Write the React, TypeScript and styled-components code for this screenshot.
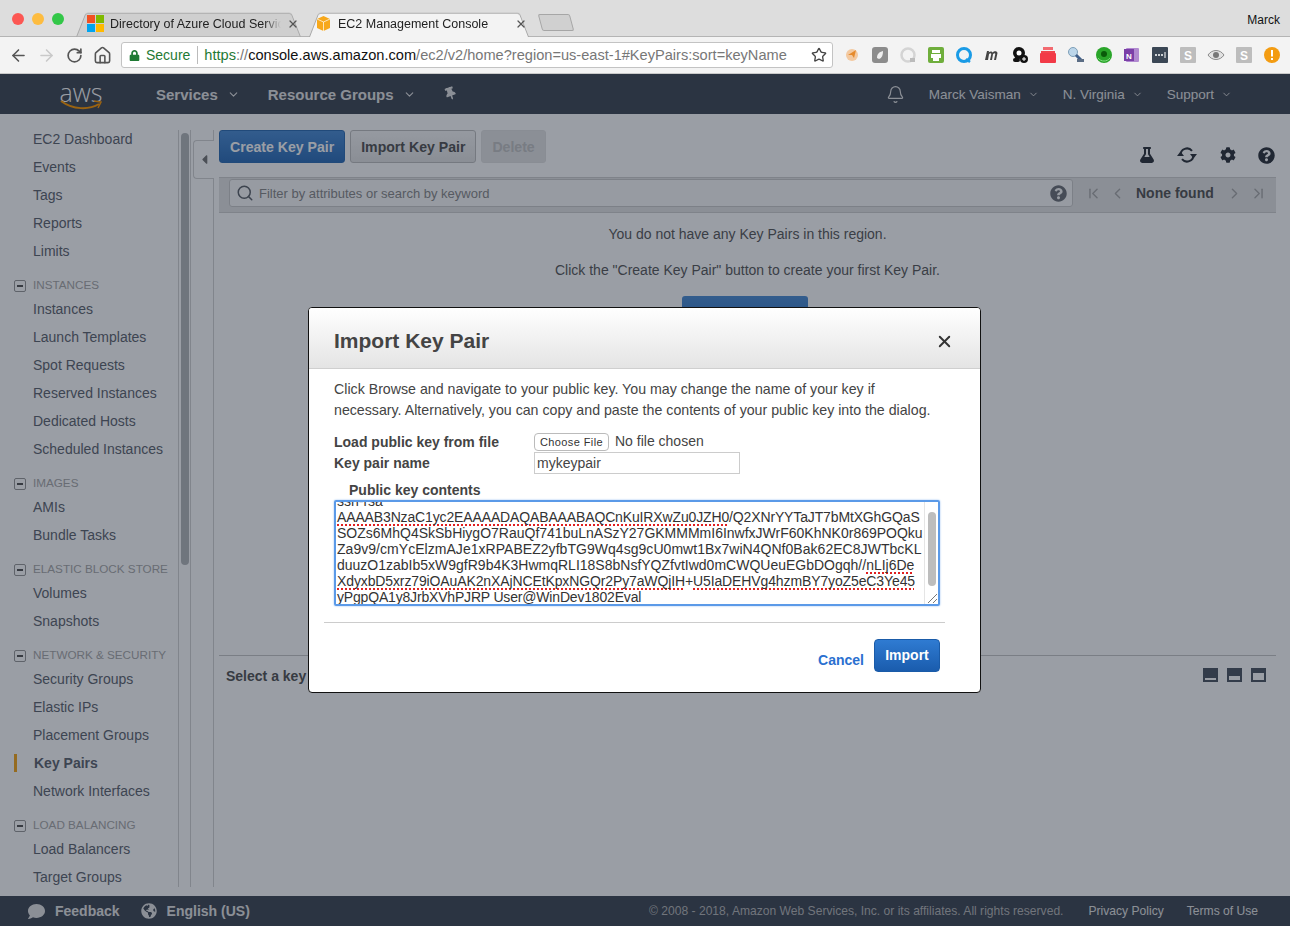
import React from "react";
import styled, { createGlobalStyle } from "styled-components";
import {
  ArrowLeft,
  ArrowRight,
  RotateCw,
  Home,
  Star,
  Bell,
  Search,
  ChevronDown,
  ChevronFirst,
  ChevronLast,
  ChevronLeft,
  ChevronRight,
  X,
} from "lucide-react";
import {
  FaLock,
  FaFlask,
  FaCog,
  FaQuestionCircle,
  FaThumbtack,
  FaComment,
  FaGlobeAmericas,
  FaCaretLeft,
} from "react-icons/fa";

const GlobalStyle = createGlobalStyle`
  html, body {
    margin: 0;
    padding: 0;
    background: #fff;
    font-family: "Liberation Sans", Arial, sans-serif;
  }
`;

const navGroups = [
  { title: "", items: ["EC2 Dashboard", "Events", "Tags", "Reports", "Limits"] },
  {
    title: "INSTANCES",
    items: ["Instances", "Launch Templates", "Spot Requests", "Reserved Instances", "Dedicated Hosts", "Scheduled Instances"],
  },
  { title: "IMAGES", items: ["AMIs", "Bundle Tasks"] },
  { title: "ELASTIC BLOCK STORE", items: ["Volumes", "Snapshots"] },
  {
    title: "NETWORK & SECURITY",
    items: ["Security Groups", "Elastic IPs", "Placement Groups", "Key Pairs", "Network Interfaces"],
  },
  { title: "LOAD BALANCING", items: ["Load Balancers", "Target Groups"] },
];

const extensionIcons = [
  <svg key="a" viewBox="0 0 18 18" width="18" height="18"><circle cx="9" cy="9" r="6" fill="#f3c9a0" /><path d="M5 9l8-5-2 8-2-3z" fill="#e58a2c" /></svg>,
  <svg key="b" viewBox="0 0 18 18" width="18" height="18"><rect x="1" y="1" width="16" height="16" rx="3" fill="#8c8c8c" /><path d="M6 12c0-4 2-6 6-7 0 4-1 7-4 8z" fill="#eee" /></svg>,
  <svg key="c" viewBox="0 0 18 18" width="18" height="18"><circle cx="9" cy="9" r="6.500" fill="none" stroke="#d4d4d4" strokeWidth="2.500" /><rect x="11" y="12" width="5" height="4" fill="#bbb" /></svg>,
  <svg key="d" viewBox="0 0 18 18" width="18" height="18"><rect x="1" y="1" width="16" height="16" rx="2" fill="#6fae3c" /><path d="M5 4h8v3H5zM4 8h10v4h-2v3H6v-3H4z" fill="#fff" /></svg>,
  <svg key="e" viewBox="0 0 18 18" width="18" height="18"><circle cx="9" cy="9" r="6.500" fill="none" stroke="#1a9be6" strokeWidth="3" /><path d="M11 13l4 3" stroke="#1a9be6" strokeWidth="2.500" /></svg>,
  <svg key="f" viewBox="0 0 18 18" width="18" height="18"><path d="M2 14l2-9h2l-.3 1.500C7 5 9 5 9.600 6.600 11 5 14 4.800 14.500 7l-1.500 7h-2l1.300-6c0-1-1.500-1-2.300.3L9 14H7l1.300-6c0-1-1.600-1-2.300.3L5 14z" fill="#444" /></svg>,
  <svg key="g" viewBox="0 0 18 18" width="18" height="18"><circle cx="8" cy="7" r="6" fill="#111" /><circle cx="8" cy="7" r="2.500" fill="#fff" /><circle cx="13" cy="13" r="4" fill="#111" /><path d="M11 13h4M13 11v4" stroke="#fff" /><rect x="2" y="12" width="7" height="4" rx="2" fill="#111" /></svg>,
  <svg key="h" viewBox="0 0 18 18" width="18" height="18"><rect x="4" y="1" width="10" height="3" fill="#f26a70" /><rect x="2" y="5" width="14" height="2" fill="#f0444d" /><rect x="1" y="7" width="16" height="10" rx="1" fill="#f23a47" /></svg>,
  <svg key="i" viewBox="0 0 18 18" width="18" height="18"><circle cx="6" cy="6" r="4.500" fill="#bcd6ea" stroke="#7d9fb8" /><path d="M9 9l5 5" stroke="#3f5f8a" strokeWidth="3" /><rect x="10" y="13" width="7" height="3" fill="#5b6d85" /></svg>,
  <svg key="j" viewBox="0 0 18 18" width="18" height="18"><circle cx="9" cy="9" r="8" fill="#2aa52a" /><circle cx="9" cy="8" r="3" fill="#0a5a0a" /><path d="M3 12c3 4 9 4 12 0" stroke="#7fdc7f" fill="none" /></svg>,
  <svg key="k" viewBox="0 0 18 18" width="18" height="18"><rect x="3" y="2" width="13" height="14" rx="1" fill="#b18ad0" /><rect x="1" y="3" width="10" height="12" fill="#7b3fa8" /><text x="3" y="12.500" fontSize="8" fontWeight="700" fill="#fff">N</text></svg>,
  <svg key="l" viewBox="0 0 18 18" width="18" height="18"><rect x="1" y="1" width="16" height="16" rx="1" fill="#3b4755" /><circle cx="5" cy="9" r="1" fill="#fff" /><circle cx="8" cy="9" r="1" fill="#fff" /><circle cx="11" cy="9" r="1" fill="#fff" /><rect x="13.500" y="6" width="1" height="6" fill="#fff" /></svg>,
  <svg key="m" viewBox="0 0 18 18" width="18" height="18"><rect x="1" y="1" width="16" height="16" rx="1" fill="#bdbdbd" /><text x="5" y="14" fontSize="12" fontWeight="700" fill="#fff">S</text></svg>,
  <svg key="n" viewBox="0 0 18 18" width="18" height="18"><path d="M1 9c4-6 12-6 16 0-4 6-12 6-16 0z" fill="#e2e2e2" stroke="#8a8a8a" /><circle cx="9" cy="9" r="3" fill="#777" /></svg>,
  <svg key="o" viewBox="0 0 18 18" width="18" height="18"><rect x="1" y="1" width="16" height="16" rx="1" fill="#bdbdbd" /><text x="5" y="14" fontSize="12" fontWeight="700" fill="#fff">S</text></svg>,
  <svg key="p" viewBox="0 0 18 18" width="18" height="18"><circle cx="9" cy="9" r="8" fill="#f39c12" /><rect x="8" y="4" width="2" height="6.500" fill="#fff" /><rect x="8" y="12" width="2" height="2" fill="#fff" /></svg>,
];

const App: React.FC = () => {
  return (
    <Root>
      <GlobalStyle />
      <TabStrip>
        <TrafficLights>
          <Light $color="#fc5753" />
          <Light $color="#fdbc40" />
          <Light $color="#33c748" />
        </TrafficLights>
        <BrowserTab $width={233} $inset={15}>
          <svg viewBox="0 0 17 17" width="17" height="17">
            <rect x="0" y="0" width="8" height="8" fill="#f25022" />
            <rect x="9" y="0" width="8" height="8" fill="#7fba00" />
            <rect x="0" y="9" width="8" height="8" fill="#00a4ef" />
            <rect x="9" y="9" width="8" height="8" fill="#ffb900" />
          </svg>
          <TabTitle>Directory of Azure Cloud Services</TabTitle>
          <X size={12} strokeWidth={2.500} color="#555" />
        </BrowserTab>
        <BrowserTab $active $width={228} $inset={10}>
          <svg viewBox="0 0 17 17" width="17" height="17">
            <path d="M8.500 1L15 4v9l-6.500 3L2 13V4z" fill="#f7a81b" />
            <path d="M2 4l6.500 3L15 4M8.500 7v9" stroke="#fff" fill="none" strokeWidth="0.700" />
          </svg>
          <TabTitle>EC2 Management Console</TabTitle>
          <X size={12} strokeWidth={2.500} color="#555" />
        </BrowserTab>
        <NewTab />
        <ProfileName>Marck</ProfileName>
      </TabStrip>

      <BrowserBar>
        <BarIcon><ArrowLeft size={19} color="#555" /></BarIcon>
        <BarIcon><ArrowRight size={19} color="#c9c9c9" /></BarIcon>
        <BarIcon><RotateCw size={17} color="#555" strokeWidth={2.400} /></BarIcon>
        <BarIcon><Home size={19} color="#555" /></BarIcon>
        <AddressBar>
          <FaLock size={11} color="#1f7a34" />
          <SecureLabel>Secure</SecureLabel>
          <AddressDivider />
          <Url>
            <UrlScheme>https</UrlScheme>
            <UrlMuted>://</UrlMuted>
            <UrlHost>console.aws.amazon.com</UrlHost>
            <UrlMuted>/ec2/v2/home?region=us-east-1#KeyPairs:sort=keyName</UrlMuted>
          </Url>
          <Star size={16} color="#444" />
        </AddressBar>
        <Extensions>
          {extensionIcons.map((icon) => (
            <ExtensionSlot key={icon.key}>{icon}</ExtensionSlot>
          ))}
        </Extensions>
      </BrowserBar>

      <Page>
        <Header>
          <Logo>
            <LogoText>aws</LogoText>
            <svg viewBox="0 0 42 10" width="42" height="10">
              <path d="M1 1c12 9 28 9 38 3" fill="none" stroke="#f90" strokeWidth="2" />
              <path d="M34 1l7 1-3 6" fill="none" stroke="#f90" strokeWidth="1.500" />
            </svg>
          </Logo>
          <HeaderMenu $bold>Services<ChevronDown size={13} /></HeaderMenu>
          <HeaderMenu $bold>Resource Groups<ChevronDown size={13} /></HeaderMenu>
          <PinIcon><FaThumbtack size={13} /></PinIcon>
          <HeaderRight>
            <BellIcon><Bell size={19} strokeWidth={1.500} /></BellIcon>
            <HeaderMenu>Marck Vaisman<ChevronDown size={11} /></HeaderMenu>
            <HeaderMenu>N. Virginia<ChevronDown size={11} /></HeaderMenu>
            <HeaderMenu>Support<ChevronDown size={11} /></HeaderMenu>
          </HeaderRight>
        </Header>

        <Content>
          <Sidebar>
            {navGroups.map((group) => (
              <div key={group.title || "top"}>
                {group.title && (
                  <GroupTitle>
                    <GroupToggle />
                    {group.title}
                  </GroupTitle>
                )}
                {group.items.map((item) => (
                  <NavItem key={item} $active={item === "Key Pairs"}>{item}</NavItem>
                ))}
              </div>
            ))}
          </Sidebar>
          <SideScroll><SideThumb /></SideScroll>
          <CollapseColumn>
            <CollapseTab><FaCaretLeft size={15} /></CollapseTab>
          </CollapseColumn>

          <Main>
            <ActionRow>
              <ActionButton $primary>Create Key Pair</ActionButton>
              <ActionButton>Import Key Pair</ActionButton>
              <ActionButton $disabled>Delete</ActionButton>
              <ToolIcons>
                <FaFlask size={16} />
                <svg viewBox="0 0 20 18" width="20" height="18" fill="currentColor">
                  <path d="M3.500 9a6.500 6.500 0 0 1 11.500-4.200M16.500 9a6.500 6.500 0 0 1-11.500 4.200" fill="none" stroke="currentColor" strokeWidth="2" />
                  <path d="M13 8h7l-3.500 4.500zM0 10h7L3.500 5.500z" />
                </svg>
                <FaCog size={16} />
                <FaQuestionCircle size={17} />
              </ToolIcons>
            </ActionRow>
            <FilterBar>
              <FilterBox>
                <Search size={18} color="#5f646b" />
                <FilterText>Filter by attributes or search by keyword</FilterText>
                <FaQuestionCircle size={17} color="#6f7379" />
              </FilterBox>
              <Pager>
                <PagerIcon><ChevronFirst size={17} /></PagerIcon>
                <PagerIcon><ChevronLeft size={17} /></PagerIcon>
                <PagerLabel>None found</PagerLabel>
                <PagerIcon><ChevronRight size={17} /></PagerIcon>
                <PagerIcon><ChevronLast size={17} /></PagerIcon>
              </Pager>
            </FilterBar>
            <EmptyMessage>You do not have any Key Pairs in this region.</EmptyMessage>
            <EmptyMessage>Click the "Create Key Pair" button to create your first Key Pair.</EmptyMessage>
            <CreateButton>Create Key Pair</CreateButton>
            <LowerPane>
              <LowerText>Select a key pair above</LowerText>
              <PaneIcons>
                <PaneIcon $fill={2} />
                <PaneIcon $fill={4} />
                <PaneIcon $fill={7} />
              </PaneIcons>
            </LowerPane>
          </Main>
        </Content>

        <Footer>
          <FooterLink><FaComment size={17} />Feedback</FooterLink>
          <FooterLink><FaGlobeAmericas size={16} />English (US)</FooterLink>
          <FooterRight>
            <FooterNote>© 2008 - 2018, Amazon Web Services, Inc. or its affiliates. All rights reserved.</FooterNote>
            <FooterNote>Privacy Policy</FooterNote>
            <FooterNote>Terms of Use</FooterNote>
          </FooterRight>
        </Footer>

        <Overlay>
          <Modal>
            <ModalHeader>
              <ModalTitle>Import Key Pair</ModalTitle>
              <X size={19} strokeWidth={2.400} color="#333" />
            </ModalHeader>
            <ModalBody>
              <Intro>
                Click Browse and navigate to your public key. You may change the name of your key if
                <br />
                necessary. Alternatively, you can copy and paste the contents of your public key into the dialog.
              </Intro>
              <FormGrid>
                <FormLabel>Load public key from file</FormLabel>
                <FileRow>
                  <ChooseFile>Choose File</ChooseFile>
                  No file chosen
                </FileRow>
                <FormLabel>Key pair name</FormLabel>
                <NameInput>mykeypair</NameInput>
              </FormGrid>
              <ContentsLabel>Public key contents</ContentsLabel>
              <KeyArea>
                <KeyText>
                  <KeyLine $first>ssh-rsa</KeyLine>
                  <KeyLine $spacing={-0.14}><Typo>AAAAB3NzaC1yc2EAAAADAQABAAABAQCnKuIRXwZu0JZH0</Typo>/Q2XNrYYTaJT7bMtXGhGQaS</KeyLine>
                  <KeyLine>SOZs6MhQ4SkSbHiygO7RauQf741buLnASzY27GKMMMmI6InwfxJWrF60KhNK0r869POQku</KeyLine>
                  <KeyLine $spacing={0.04}>Za9v9/cmYcElzmAJe1xRPABEZ2yfbTG9Wq4sg9cU0mwt1Bx7wiN4QNf0Bak62EC8JWTbcKL</KeyLine>
                  <KeyLine>duuzO1zabIb5xW9gfR9b4K3HwmqRLI18S8bNsfYQZfvtIwd0mCWQUeuEGbDOgqh//<Typo>nLIj6De</Typo></KeyLine>
                  <KeyLine $spacing={-0.12}><Typo>XdyxbD5xrz79iOAuAK2nXAjNCEtKpxNGQr2Py7aWQjIH</Typo>+<Typo>U5IaDEHVg4hzmBY7yoZ5eC3Ye45</Typo></KeyLine>
                  <KeyLine $spacing={-0.18}><Typo>yPgpQA1y8JrbXVhPJRP</Typo> User@WinDev1802Eval</KeyLine>
                </KeyText>
                <KeyScroll>
                  <KeyThumb />
                  <KeyResizer viewBox="0 0 12 12" width="12" height="12">
                    <path d="M2 11l9-9M7 11l4-4" stroke="#777" strokeWidth="1" />
                  </KeyResizer>
                </KeyScroll>
              </KeyArea>
              <ModalRule />
              <ModalActions>
                <CancelLink>Cancel</CancelLink>
                <ImportButton>Import</ImportButton>
              </ModalActions>
            </ModalBody>
          </Modal>
        </Overlay>
      </Page>
    </Root>
  );
};

export default App;

const Root = styled.div`
  width: 1290px;
  height: 926px;
  display: flex;
  flex-direction: column;
  overflow: hidden;
  color: #444;
`;

const TabStrip = styled.div`
  height: 37px;
  flex: none;
  display: flex;
  align-items: flex-end;
  background: #dddddd;
  border-bottom: 1px solid #b4b4b4;
  box-sizing: border-box;
  position: relative;
`;

const TrafficLights = styled.div`
  display: flex;
  gap: 8px;
  padding: 0 0 11px 12px;
  width: 72px;
  box-sizing: border-box;
  flex: none;
`;

const Light = styled.span<{ $color: string }>`
  width: 12px;
  height: 12px;
  border-radius: 50%;
  background: ${(p) => p.$color};
`;

const BrowserTab = styled.div<{ $active?: boolean; $width: number; $inset: number }>`
  width: ${(p) => p.$width}px;
  height: 27px;
  box-sizing: border-box;
  padding: 0 6px 0 ${(p) => p.$inset}px;
  display: flex;
  align-items: center;
  gap: 6px;
  position: relative;
  z-index: ${(p) => (p.$active ? 2 : 1)};
  color: #222;
  margin-bottom: -1px;

  &::before {
    content: "";
    position: absolute;
    inset: 0 4px;
    z-index: -1;
    transform: perspective(60px) rotateX(12deg);
    transform-origin: bottom;
    background: ${(p) => (p.$active ? "#f3f3f3" : "#cfcfcf")};
    border: 1px solid #a9a9a9;
    border-bottom: ${(p) => (p.$active ? "none" : "1px solid #b4b4b4")};
    border-radius: 3px 3px 0 0;
  }
`;

const TabTitle = styled.span`
  flex: 1;
  white-space: nowrap;
  overflow: hidden;
  font-size: 12.500px;
  mask-image: linear-gradient(to right, #000 90%, transparent);
`;

const NewTab = styled.div`
  width: 30px;
  height: 15px;
  margin: 0 0 5px 7px;
  background: #d0d0d0;
  border: 1px solid #a6a6a6;
  border-radius: 2px;
  transform: skewX(15deg);
`;

const ProfileName = styled.div`
  position: absolute;
  right: 10px;
  top: 13px;
  font-size: 12px;
  color: #111;
`;

const BrowserBar = styled.div`
  height: 37px;
  flex: none;
  box-sizing: border-box;
  display: flex;
  align-items: center;
  padding: 0 4px 0 4px;
  background: #f3f3f3;
  border-bottom: 1px solid #c9c9c9;
`;

const BarIcon = styled.div`
  width: 28px;
  display: flex;
  justify-content: center;
`;

const AddressBar = styled.div`
  width: 712px;
  height: 26px;
  margin-left: 5px;
  box-sizing: border-box;
  background: #fff;
  border: 1px solid #c3c3c3;
  border-radius: 3px;
  display: flex;
  align-items: center;
  padding: 0 5px 0 7px;
`;

const SecureLabel = styled.span`
  font-size: 14px;
  color: #1f7a34;
  margin-left: 6px;
`;

const AddressDivider = styled.span`
  width: 1px;
  height: 18px;
  background: #bbb;
  margin: 0 6px 0 7px;
`;

const Url = styled.div`
  flex: 1;
  font-size: 14.600px;
  white-space: nowrap;
  overflow: hidden;
`;

const UrlScheme = styled.span`
  color: #1f7a34;
`;

const UrlMuted = styled.span`
  color: #777;
`;

const UrlHost = styled.span`
  color: #111;
`;

const Extensions = styled.div`
  display: flex;
  margin-left: 5px;
`;

const ExtensionSlot = styled.div`
  width: 28px;
  display: flex;
  justify-content: center;
  align-items: center;
`;

const Page = styled.div`
  flex: 1;
  min-height: 0;
  position: relative;
  display: flex;
  flex-direction: column;
  background: #fff;
`;

const Header = styled.div`
  height: 40px;
  flex: none;
  display: flex;
  align-items: center;
  background: #414955;
  color: #e6e6e6;
`;

const Logo = styled.div`
  width: 42px;
  margin: 0 54px 0 60px;
  display: flex;
  flex-direction: column;
  align-items: center;
  svg {
    margin-top: -5px;
  }
`;

const LogoText = styled.span`
  font-family: "Open Sans", sans-serif;
  font-weight: 300;
  font-size: 25px;
  line-height: 26px;
  color: #fff;
`;

const HeaderMenu = styled.div<{ $bold?: boolean }>`
  display: flex;
  align-items: center;
  gap: ${(p) => (p.$bold ? 9 : 7)}px;
  font-size: ${(p) => (p.$bold ? 15 : 13.5)}px;
  font-weight: ${(p) => (p.$bold ? 700 : 400)};
  margin-right: ${(p) => (p.$bold ? 28 : 24)}px;
`;

const PinIcon = styled.div`
  display: flex;
  transform: rotate(-20deg);
  margin-top: -1px;
`;

const HeaderRight = styled.div`
  margin-left: auto;
  padding-right: 34px;
  display: flex;
  align-items: center;
`;

const BellIcon = styled.div`
  display: flex;
  margin-right: 24px;
`;

const Content = styled.div`
  flex: 1;
  min-height: 0;
  display: flex;
  margin-bottom: 9px;
`;

const Sidebar = styled.nav`
  width: 178px;
  flex: none;
  padding-top: 11px;
  box-sizing: border-box;
  overflow: hidden;
`;

const GroupTitle = styled.div`
  height: 30px;
  box-sizing: border-box;
  padding: 10px 0 0 33px;
  line-height: 20px;
  font-size: 11.700px;
  color: #aaaaaa;
  position: relative;
  white-space: nowrap;
`;

const GroupToggle = styled.span`
  position: absolute;
  left: 14px;
  top: 15px;
  width: 10px;
  height: 10px;
  border: 1px solid #999;
  border-radius: 2px;

  &::after {
    content: "";
    position: absolute;
    left: 2px;
    top: 4px;
    width: 6px;
    height: 2px;
    background: #555;
  }
`;

const NavItem = styled.div<{ $active?: boolean }>`
  height: 28px;
  line-height: 28px;
  padding-left: ${(p) => (p.$active ? 34 : 33)}px;
  font-size: 14px;
  font-weight: ${(p) => (p.$active ? 700 : 400)};
  color: #5f6670;
  position: relative;
  white-space: nowrap;

  ${(p) =>
    p.$active &&
    `&::before {
      content: "";
      position: absolute;
      left: 14px;
      top: 5px;
      width: 3px;
      height: 18px;
      background: #f7a81b;
    }`}
`;

const SideScroll = styled.div`
  width: 13px;
  flex: none;
  margin-top: 16px;
  box-sizing: border-box;
  border-left: 1px solid #d4d4d4;
  border-right: 1px solid #d4d4d4;
  padding: 3px 1px 0 2px;
`;

const SideThumb = styled.div`
  height: 432px;
  background: #b6b8bb;
  border-radius: 4px;
`;

const CollapseColumn = styled.div`
  width: 23px;
  flex: none;
  margin-top: 16px;
  box-sizing: border-box;
  border-right: 1px solid #d4d4d4;
  position: relative;
`;

const CollapseTab = styled.div`
  position: absolute;
  left: 2px;
  right: -1px;
  top: 10px;
  height: 39px;
  box-sizing: border-box;
  background: #fff;
  border: 1px solid #d4d4d4;
  border-right: none;
  border-radius: 4px 0 0 4px;
  display: flex;
  align-items: center;
  justify-content: center;
  color: #777;
`;

const Main = styled.main`
  flex: 1;
  min-width: 0;
  padding: 16px 14px 0 5px;
  display: flex;
  flex-direction: column;
`;

const ActionRow = styled.div`
  height: 33px;
  flex: none;
  display: flex;
  gap: 5px;
`;

const ActionButton = styled.div<{ $primary?: boolean; $disabled?: boolean }>`
  box-sizing: border-box;
  padding: 0 10px;
  line-height: 33px;
  font-size: 14.100px;
  font-weight: 700;
  border-radius: 3px;
  border: 1px solid ${(p) => (p.$primary ? "#2f6fb5" : p.$disabled ? "#e2e2e2" : "#c0c0c0")};
  background: ${(p) =>
    p.$primary
      ? "linear-gradient(#4d8ed6, #2f6fb9)"
      : p.$disabled
      ? "#e6e6e6"
      : "linear-gradient(#f7f7f7, #e4e4e4)"};
  color: ${(p) => (p.$primary ? "#fff" : p.$disabled ? "#c4c4c4" : "#555")};
`;

const ToolIcons = styled.div`
  margin-left: auto;
  align-self: flex-end;
  width: 136px;
  padding-right: 1px;
  margin-bottom: -1px;
  display: flex;
  justify-content: space-between;
  align-items: center;
  color: #2e333b;
`;

const FilterBar = styled.div`
  margin-top: 14px;
  height: 36px;
  flex: none;
  box-sizing: border-box;
  background: #e6e6e6;
  border-top: 1px solid #d0d0d0;
  border-bottom: 1px solid #d0d0d0;
  padding: 1px 0 0 10px;
  display: flex;
  align-items: flex-start;
`;

const FilterBox = styled.div`
  width: 844px;
  height: 28px;
  flex: none;
  box-sizing: border-box;
  background: #fafafa;
  border: 1px solid #ccc;
  border-radius: 3px;
  display: flex;
  align-items: center;
  padding: 0 5px 0 6px;
  gap: 5px;
`;

const FilterText = styled.span`
  flex: 1;
  font-size: 13px;
  color: #8b8b8b;
`;

const Pager = styled.div`
  flex: 1;
  height: 28px;
  padding-left: 12px;
  display: flex;
  align-items: center;
  gap: 7px;
`;

const PagerIcon = styled.div`
  display: flex;
  color: #aaa;
`;

const PagerLabel = styled.span`
  font-size: 14px;
  font-weight: 700;
  color: #555;
  white-space: nowrap;
  margin: 0 5px 0 3px;
`;

const EmptyMessage = styled.div`
  flex: none;
  margin-top: 16px;
  height: 20px;
  line-height: 20px;
  text-align: center;
  font-size: 14px;
  color: #5a5a5a;

  &:nth-child(3) {
    margin-top: 11px;
  }
`;

const CreateButton = styled.div`
  margin: 16px 0 0 463px;
  width: 126px;
  height: 44px;
  box-sizing: border-box;
  border-radius: 3px;
  background: linear-gradient(#4d8ed6, #2f6fb9);
  color: #fff;
  font-weight: 700;
  font-size: 14px;
  line-height: 44px;
  text-align: center;
`;

const LowerPane = styled.div`
  margin-top: auto;
  height: 232px;
  flex: none;
  box-sizing: border-box;
  border-top: 1px solid #c9c9c9;
  padding: 12px 10px 0 7px;
  display: flex;
  justify-content: space-between;
  align-items: flex-start;
`;

const LowerText = styled.div`
  font-size: 14px;
  font-weight: 700;
  color: #555;
`;

const PaneIcons = styled.div`
  display: flex;
  gap: 9px;
`;

const PaneIcon = styled.span<{ $fill: number }>`
  width: 15px;
  height: 14px;
  box-sizing: border-box;
  background: #4f5763;
  position: relative;

  &::after {
    content: "";
    position: absolute;
    left: 2px;
    right: 2px;
    bottom: 2px;
    height: ${(p) => p.$fill}px;
    background: #fff;
  }
`;

const Footer = styled.div`
  height: 30px;
  flex: none;
  display: flex;
  align-items: center;
  padding-left: 28px;
  background: #414955;
  color: #e6e6e6;
`;

const FooterLink = styled.div`
  display: flex;
  align-items: center;
  gap: 10px;
  font-size: 14px;
  font-weight: 700;
  margin-right: 21px;
`;

const FooterRight = styled.div`
  margin-left: auto;
  padding-right: 32px;
  display: flex;
  gap: 23px;
`;

const FooterNote = styled.span`
  font-size: 12.100px;
  color: #b8b8b8;

  &:first-child {
    margin-right: 2px;
  }

  &:not(:first-child) {
    color: #e6e6e6;
  }
`;

const Overlay = styled.div`
  position: absolute;
  inset: 0;
  padding-right: 1px;
  background: rgba(15, 25, 40, 0.42);
  display: flex;
  align-items: center;
  justify-content: center;
`;

const Modal = styled.div`
  width: 673px;
  height: 386px;
  box-sizing: border-box;
  background: #fff;
  border: 1px solid #111;
  border-radius: 4px;
  overflow: hidden;
`;

const ModalHeader = styled.div`
  height: 61px;
  box-sizing: border-box;
  padding: 6px 26px 0 25px;
  display: flex;
  align-items: center;
  justify-content: space-between;
  background: linear-gradient(#ffffff, #e4e4e4);
  border-bottom: 1px solid #cfcfcf;
`;

const ModalTitle = styled.div`
  font-size: 21px;
  font-weight: 700;
  color: #444;
`;

const ModalBody = styled.div`
  padding: 10px 40px 0 25px;
  font-size: 14.200px;
  color: #444;
`;

const Intro = styled.div`
  line-height: 21px;
  white-space: nowrap;
`;

const FormGrid = styled.div`
  margin-top: 11px;
  display: grid;
  grid-template-columns: 200px 1fr;
  grid-template-rows: 20px 22px;
  align-items: center;
  font-size: 14px;
`;

const FormLabel = styled.div`
  font-weight: 700;
`;

const FileRow = styled.div`
  display: flex;
  align-items: center;
  gap: 6px;
  margin-top: -2px;
`;

const ChooseFile = styled.div`
  width: 75px;
  height: 18px;
  box-sizing: border-box;
  border: 1px solid #bbb;
  border-radius: 4px;
  background: #fff;
  font-size: 11px;
  line-height: 17px;
  letter-spacing: 0.400px;
  text-align: center;
  color: #333;
  margin-top: 1px;
`;

const NameInput = styled.div`
  width: 206px;
  height: 22px;
  box-sizing: border-box;
  border: 1px solid #ccc;
  padding-left: 2px;
  line-height: 21px;
`;

const ContentsLabel = styled.div`
  margin: 8px 0 0 15px;
  height: 18px;
  line-height: 16px;
  font-size: 14px;
  font-weight: 700;
`;

const KeyArea = styled.div`
  width: 606px;
  height: 106px;
  box-sizing: border-box;
  display: flex;
  border: 2px solid #5b9ae8;
  border-radius: 2px;
  box-shadow: 0 0 2px #8cb8ee;
  overflow: hidden;
`;

const KeyText = styled.div`
  flex: 1;
  min-width: 0;
  padding-left: 1px;
  overflow: hidden;
  font-size: 14px;
  line-height: 16px;
  color: #333;
`;

const KeyLine = styled.div<{ $first?: boolean; $spacing?: number }>`
  white-space: pre;
  height: 16px;
  letter-spacing: ${(p) => p.$spacing ?? 0}px;
  ${(p) => p.$first && "margin-top: -9px;"}
`;

const Typo = styled.span`
  text-decoration: underline dotted #e02020 2px;
  text-underline-offset: 2px;
  text-decoration-skip-ink: none;
`;

const KeyScroll = styled.div`
  width: 14px;
  flex: none;
  border-left: 1px solid #e5e5e5;
  position: relative;
  padding: 10px 2px 0 3px;
  box-sizing: border-box;
`;

const KeyThumb = styled.div`
  height: 74px;
  background: #bdbdbd;
  border-radius: 4px;
`;

const KeyResizer = styled.svg`
  position: absolute;
  right: 0;
  bottom: 0;
`;

const ModalRule = styled.div`
  margin: 16px -5px 0 -10px;
  height: 1px;
  background: #cccccc;
`;

const ModalActions = styled.div`
  margin-top: 16px;
  display: flex;
  justify-content: flex-end;
  align-items: center;
  gap: 10px;
  font-size: 14px;
`;

const CancelLink = styled.span`
  font-weight: 700;
  color: #2a70d0;
  margin-top: 9px;
`;

const ImportButton = styled.div`
  width: 66px;
  height: 33px;
  box-sizing: border-box;
  border: 1px solid #1a5ba8;
  border-radius: 4px;
  background: linear-gradient(#2f7bd2, #1a5cad);
  color: #fff;
  font-weight: 700;
  text-align: center;
  line-height: 31px;
`;
